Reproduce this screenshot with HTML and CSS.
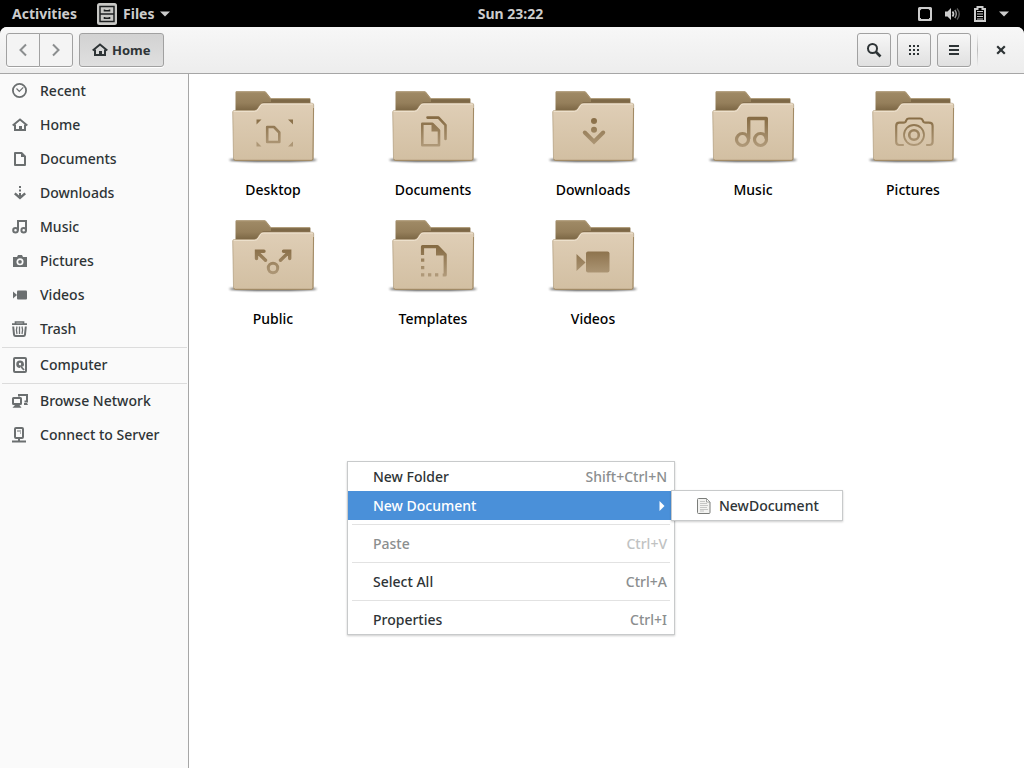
FILE: index.html
```html
<!DOCTYPE html>
<html lang="en">
<head>
<meta charset="utf-8">
<title>Home</title>
<link rel="stylesheet" href="styles.css">
</head>
<body>
<svg class="defs" aria-hidden="true">
  <defs>
    <linearGradient id="front" x1="0" y1="0" x2="0" y2="1">
      <stop offset="0" stop-color="#dfceb6"/><stop offset="1" stop-color="#d2bfa2"/>
    </linearGradient>
    <linearGradient id="back" gradientUnits="userSpaceOnUse" x1="0" y1="11" x2="0" y2="31">
      <stop offset="0" stop-color="#a08b67"/><stop offset=".6" stop-color="#957f5b"/><stop offset="1" stop-color="#7a6543"/>
    </linearGradient>
    <linearGradient id="mark" gradientUnits="userSpaceOnUse" x1="0" y1="36" x2="0" y2="68">
      <stop offset="0" stop-color="#846941"/><stop offset="1" stop-color="#b29c7c"/>
    </linearGradient>
    <filter id="soft" x="-10%" y="-100%" width="120%" height="300%"><feGaussianBlur stdDeviation="1.2"/></filter>
    <symbol id="folder" viewBox="0 0 106 90">
      <ellipse cx="53" cy="80" rx="44" ry="1.800" fill="#000" opacity=".75" filter="url(#soft)"/>
      <path d="M15.500 35V12.300q0-1 1-1H44.500q1 0 1.600.8L51 18.200h38.500q1 0 1 1V35z" fill="url(#back)"/>
      <path d="M51 19h39v6H40l3-3h8z" fill="#7d6847"/>
      <path d="M16 12h29l5.500 6.700H90" fill="none" stroke="#b09a76" stroke-width=".8"/>
      <path d="M12.700 32q0-1.500 1.500-1.500H34q2.300 0 3.500-1.800l2.500-4q1-1.500 3-1.500H92q1.700 0 1.700 1.700L93 78.500q0 2-2 2H15.500q-2 0-2-2z" fill="url(#front)" stroke="#a58e6b" stroke-width=".6"/>
      <path d="M13.500 31.300H34.500q2.300 0 3.500-1.800l2.500-4q1-1.500 3-1.500H92.800" fill="none" stroke="#f1e5d3" stroke-width="1"/>
      <path d="M14 79.300q.5 1 1.500 1h76q1.300 0 1.500-1.500L93.500 28" fill="none" stroke="#a18963" stroke-width="1"/>
    </symbol>
    <symbol id="home" viewBox="0 0 16 16">
      <path d="M.7 8.500 8 2.500l7.300 6" fill="none" stroke="currentColor" stroke-width="1.900"/>
      <path d="M3 7.500V13h10V7.500" fill="none" stroke="currentColor" stroke-width="2"/>
      <path d="M7 9h3v5H7z" fill="currentColor"/>
    </symbol>
  </defs>
</svg>

<header class="topbar">
  <div class="topbar-side">
    <button class="top-button">Activities</button>
    <button class="top-button app-button">
      <svg width="20" height="22" viewBox="0 0 20 22"><rect x="0" y="0" width="20" height="22" rx="2.500" fill="#c8c8c5"/><rect x="3" y="3.500" width="14" height="15" fill="none" stroke="#1c1f20" stroke-width="1.500"/><path d="M3 11h14" stroke="#1c1f20" stroke-width="1.500"/><path d="M7.500 6.500v1.200h5V6.500M7.500 14v1.200h5V14" fill="none" stroke="#1c1f20" stroke-width="1.600"/></svg>
      <span>Files</span>
      <svg width="10" height="6" viewBox="0 0 10 6"><path d="M0 .5h10L5 5.500z" fill="#ccc"/></svg>
    </button>
  </div>
  <button class="top-button clock">Sun 23:22</button>
  <div class="topbar-side topbar-end">
    <button class="top-button status" aria-label="System">
      <svg width="14" height="14" viewBox="0 0 14 14"><path fill-rule="evenodd" d="M1.500 0h11Q14 0 14 1.500v11q0 1.500-1.500 1.500h-11Q0 14 0 12.500v-11Q0 0 1.500 0zM3.500 2L2 3.500V11h1v1h8v-1h1V3.500L10.500 2z" fill="#ccc"/></svg>
      <svg width="16" height="14" viewBox="0 0 16 14"><path d="M0 4.500h2.500L6 1v12L2.500 9.500H0z" fill="#ccc"/><path d="M7.500 4.500q2 2.500 0 5" fill="none" stroke="#ccc" stroke-width="1.700"/><path d="M9.800 3q3 4 0 8" fill="none" stroke="#999" stroke-width="1.400"/><path d="M12 1.500q4.500 5.500 0 11" fill="none" stroke="#555" stroke-width="1.400"/></svg>
      <svg width="12" height="16" viewBox="0 0 12 16"><path d="M1 3h2.500V1h5v2H11v12H1z" fill="none" stroke="#ccc" stroke-width="2"/><path d="M3 5.500h6M3 8h6M3 10.500h6M3 13h6" stroke="#ccc" stroke-width="1.100"/></svg>
      <svg width="10" height="6" viewBox="0 0 10 6"><path d="M0 .5h10L5 5.500z" fill="#ccc"/></svg>
    </button>
  </div>
</header>

<div class="window">
  <div class="headerbar">
    <div class="linked">
      <button class="btn" aria-label="Back" disabled><svg width="16" height="16" viewBox="0 0 16 16"><path d="M11 2.500 5.500 8l5.500 5.500" fill="none" stroke="#8b8e8f" stroke-width="2"/></svg></button>
      <button class="btn" aria-label="Forward" disabled><svg width="16" height="16" viewBox="0 0 16 16"><path d="M5 2.500 10.500 8 5 13.500" fill="none" stroke="#8b8e8f" stroke-width="2"/></svg></button>
    </div>
    <button class="btn btn-path"><svg width="16" height="16"><use href="#home"/></svg><span>Home</span></button>
    <div class="tools">
      <button class="btn btn-icon" aria-label="Search"><svg width="16" height="16" viewBox="0 0 16 16"><circle cx="6.500" cy="6.500" r="4.500" fill="none" stroke="#2e3436" stroke-width="2"/><path d="M9.500 9.500 14.500 14.500" stroke="#2e3436" stroke-width="2.600"/></svg></button>
      <button class="btn btn-icon" aria-label="Grid view"><svg width="16" height="16" viewBox="0 0 16 16"><path d="M3 4h10M3 8h10M3 12h10" stroke="#2e3436" stroke-width="2" stroke-dasharray="2 2"/></svg></button>
      <button class="btn btn-icon" aria-label="Menu"><svg width="16" height="16" viewBox="0 0 16 16"><path d="M3 4h10M3 8h10M3 12h10" stroke="#2e3436" stroke-width="2"/></svg></button>
      <span class="divider"></span>
      <button class="close" aria-label="Close"><svg width="16" height="16" viewBox="0 0 16 16"><path d="M4.200 4.200l7.600 7.600M11.800 4.200l-7.600 7.600" stroke="#2e3436" stroke-width="2.200"/></svg></button>
    </div>
  </div>

  <div class="body">
    <nav class="sidebar">
      <a class="place" href="#"><svg width="16" height="16" viewBox="0 0 16 16"><circle cx="7.500" cy="7.500" r="6.600" fill="none" stroke="currentColor" stroke-width="1.800"/><path d="M4.500 5.500 7.300 8.300l4-4" fill="none" stroke="currentColor" stroke-width="1.200"/></svg>Recent</a>
      <a class="place" href="#"><svg width="16" height="16"><use href="#home"/></svg>Home</a>
      <a class="place" href="#"><svg width="16" height="16" viewBox="0 0 16 16"><path d="M3 2h6.500L13 5.500V14H3z" fill="none" stroke="currentColor" stroke-width="2" stroke-linejoin="round"/><path d="M9 2v4h4z" fill="currentColor"/></svg>Documents</a>
      <a class="place" href="#"><svg width="16" height="16" viewBox="0 0 16 16"><path d="M8 1v2M8 4.500v2M8 8v3" stroke="currentColor" stroke-width="2"/><path d="M2.800 8.300 8 13l5.200-4.700" fill="none" stroke="currentColor" stroke-width="2.400"/></svg>Downloads</a>
      <a class="place" href="#"><svg width="16" height="16" viewBox="0 0 16 16"><path d="M6 11.500V2h8v9.500" fill="none" stroke="currentColor" stroke-width="2"/><circle cx="3.500" cy="11.200" r="2.300" fill="none" stroke="currentColor" stroke-width="2"/><circle cx="11.700" cy="11.200" r="2.300" fill="none" stroke="currentColor" stroke-width="2"/></svg>Music</a>
      <a class="place" href="#"><svg width="16" height="16" viewBox="0 0 16 16"><path d="M1 4h4l1-2h4l1 2h4v10H1z" fill="currentColor"/><circle cx="8" cy="8.800" r="2.700" fill="none" stroke="#fafafa" stroke-width="1.700"/></svg>Pictures</a>
      <a class="place" href="#"><svg width="16" height="16" viewBox="0 0 16 16"><rect x="5" y="3.500" width="10" height="9" rx="1" fill="currentColor"/><path d="M1 4.500 5 8l-4 3.500z" fill="currentColor"/></svg>Videos</a>
      <a class="place" href="#"><svg width="16" height="16" viewBox="0 0 16 16"><path d="M3.500 3V1h8v2M0 3.200h15" fill="none" stroke="currentColor" stroke-width="1.700"/><path d="M1.200 5.500 2 13.500q.2 1.500 1.500 1.500h8q1.300 0 1.500-1.500l.8-8" fill="none" stroke="currentColor" stroke-width="2"/><path d="M5 5.500q-1.200 3.500 0 7.500M10 5.500q1.200 3.500 0 7.500M7.500 5.500V13" fill="none" stroke="currentColor" stroke-width="1.300"/></svg>Trash</a>
      <hr class="rule">
      <a class="place" href="#"><svg width="16" height="16" viewBox="0 0 16 16"><rect x="2" y="1" width="12" height="14" rx="1" fill="none" stroke="currentColor" stroke-width="2"/><path d="M8 3.500a3.700 3.700 0 1 0 0 7.500l.4-2.500 2.600 1.200A3.700 3.700 0 0 0 8 3.500z" fill="currentColor"/><circle cx="8" cy="7" r="1.200" fill="#fafafa"/><path d="M8.500 9l3.500 4" stroke="currentColor" stroke-width="1.800"/></svg>Computer</a>
      <hr class="rule">
      <a class="place" href="#"><svg width="16" height="16" viewBox="0 0 16 16"><path d="M7 3.500V2h8v6.500h-2.500" fill="none" stroke="currentColor" stroke-width="2"/><path d="M12 10h3l1 2h-4z" fill="currentColor"/><rect x="1" y="5" width="8" height="6" rx=".5" fill="none" stroke="currentColor" stroke-width="2"/><path d="M3 12h4.500l2 2.700H.5z" fill="currentColor"/></svg>Browse Network</a>
      <a class="place" href="#"><svg width="16" height="16" viewBox="0 0 16 16"><rect x="3" y="1" width="8" height="10" rx="1" fill="none" stroke="currentColor" stroke-width="2"/><path d="M5 4h4M8 6h1" stroke="currentColor" stroke-width="1"/><path d="M7 12v2.500M0 14.500h14" stroke="currentColor" stroke-width="2"/></svg>Connect to Server</a>
    </nav>

    <main class="files">
      <button class="file"><svg width="106" height="90" viewBox="0 0 106 90"><use href="#folder"/><path d="M36.500 39.500h5l-5 5zM73 39.500h-5l5 5zM36.500 66.500h5l-5-5zM73 66.500h-5l5-5z" fill="url(#mark)"/><path d="M47.200 47h6.800l5.300 5.500V62H47.200z" fill="none" stroke="url(#mark)" stroke-width="2.600" stroke-linejoin="round"/></svg><span>Desktop</span></button>
      <button class="file"><svg width="106" height="90" viewBox="0 0 106 90"><use href="#folder"/><path d="M42.300 43.800h10.200l6.500 6.500v15H42.300z" fill="none" stroke="url(#mark)" stroke-width="2.600" stroke-linejoin="round"/><path d="M51.500 43v8.500h8.500z" fill="url(#mark)"/><path d="M47.500 37.600h11l7 7.500V59" fill="none" stroke="url(#mark)" stroke-width="2.600" stroke-linecap="round" stroke-linejoin="round"/></svg><span>Documents</span></button>
      <button class="file"><svg width="106" height="90" viewBox="0 0 106 90"><use href="#folder"/><circle cx="54" cy="41" r="3" fill="url(#mark)"/><circle cx="54" cy="49.800" r="3" fill="url(#mark)"/><path d="M44.800 52.500 54 61.700l9.200-9.200" fill="none" stroke="url(#mark)" stroke-width="4" stroke-linecap="round"/></svg><span>Downloads</span></button>
      <button class="file"><svg width="106" height="90" viewBox="0 0 106 90"><use href="#folder"/><path d="M48.700 59V38.500h17.600V59" fill="none" stroke="url(#mark)" stroke-width="3.400" stroke-linejoin="round"/><circle cx="42.500" cy="59.500" r="6" fill="none" stroke="url(#mark)" stroke-width="3.200"/><circle cx="60.500" cy="59.500" r="6" fill="none" stroke="url(#mark)" stroke-width="3.200"/></svg><span>Music</span></button>
      <button class="file"><svg width="106" height="90" viewBox="0 0 106 90"><use href="#folder"/><path d="M43 65h-3.500q-3.300 0-3.300-3.300V46q0-3.300 3.300-3.300h4q2 0 2.600-2l.4-.8q.6-1.400 2.400-1.400h11.200q1.800 0 2.400 1.400l.4.800q.6 2 2.600 2h3.300q3.800 0 3.800 3.300v15.700q0 3.300-3.300 3.300H67" fill="none" stroke="url(#mark)" stroke-width="2.200" stroke-linecap="round"/><circle cx="54" cy="55" r="10" fill="none" stroke="url(#mark)" stroke-width="1.800"/><circle cx="54" cy="55" r="4.800" fill="none" stroke="url(#mark)" stroke-width="2.600"/></svg><span>Pictures</span></button>
      <button class="file"><svg width="106" height="90" viewBox="0 0 106 90"><use href="#folder"/><path d="M36.500 49.500v-7.200H44M37.500 43.500l8 7.800M63.500 42.300h6.200v7.200M68.500 43.500l-8 7.800" fill="none" stroke="url(#mark)" stroke-width="3.400" stroke-linecap="round"/><circle cx="53" cy="59" r="4.700" fill="none" stroke="url(#mark)" stroke-width="3"/></svg><span>Public</span></button>
      <button class="file"><svg width="106" height="90" viewBox="0 0 106 90"><use href="#folder"/><path d="M42.500 46v-8.300h15l7.700 8V66h-2.500" fill="none" stroke="url(#mark)" stroke-width="3.200" stroke-linejoin="round"/><path d="M56 37v9.500h9.500z" fill="url(#mark)"/><path d="M41 49.500h3.300v3.300H41zM41 57h3.300v3.300H41zM41 64.300h3.300v3.300H41zM48 64.300h3.300v3.300H48zM55 64.300h3.300v3.300H55z" fill="url(#mark)"/></svg><span>Templates</span></button>
      <button class="file"><svg width="106" height="90" viewBox="0 0 106 90"><use href="#folder"/><rect x="46" y="42.500" width="23.500" height="21" rx="2" fill="url(#mark)"/><path d="M36.500 45v17l9-8.500z" fill="url(#mark)"/></svg><span>Videos</span></button>
    </main>
  </div>
</div>

<div class="menu context-menu" role="menu">
  <button class="item" role="menuitem"><span>New Folder</span><kbd>Shift+Ctrl+N</kbd></button>
  <button class="item item-active" role="menuitem"><span>New Document</span><svg width="6" height="10" viewBox="0 0 6 10"><path d="M.5 0 5.500 5l-5 5z" fill="#fff"/></svg></button>
  <hr class="menu-rule">
  <button class="item" role="menuitem" disabled><span>Paste</span><kbd>Ctrl+V</kbd></button>
  <hr class="menu-rule">
  <button class="item" role="menuitem"><span>Select All</span><kbd>Ctrl+A</kbd></button>
  <hr class="menu-rule">
  <button class="item" role="menuitem"><span>Properties</span><kbd>Ctrl+I</kbd></button>
</div>
<div class="menu submenu" role="menu">
  <button class="item" role="menuitem"><svg width="14" height="16" viewBox="0 0 14 16"><path d="M1.500.5h8L13 4v10.500q0 1-1 1H1.500q-1 0-1-1v-13q0-1 1-1z" fill="#f3f3f1" stroke="#7b7d7a"/><path d="M9.500.5V4H13z" fill="#fff" stroke="#8c8e8b" stroke-width=".8"/><path d="M3 3.500h5M3 5.500h7M3 7.500h8M3 9.500h7M3 11.500h8M3 13h4" stroke="#c0c1bf" stroke-width=".9"/></svg><span>NewDocument</span></button>
</div>
</body>
</html>
```
FILE: styles.css
```css
* { box-sizing: border-box; }

body {
  margin: 0;
  min-height: 100vh;
  display: flex;
  flex-direction: column;
  background: #000;
  color: #2e3436;
  font: 500 14px/20px "Noto Sans", "Open Sans", sans-serif;
}

button {
  margin: 0;
  padding: 0;
  border: 0;
  background: none;
  color: inherit;
  font: inherit;
}

svg { display: block; flex: none; }

.defs { position: absolute; width: 0; height: 0; }

/* Shell panel */
.topbar {
  display: grid;
  grid-template-columns: 1fr auto 1fr;
  align-items: center;
  height: 27px;
  padding: 0 15px 0 12px;
  color: #ccc;
  font-size: 14px;
  font-weight: bold;
}
.topbar-side { display: flex; align-items: center; gap: 20px; }
.topbar-end { justify-content: flex-end; }
.app-button { display: flex; align-items: center; gap: 6px; }
.status { display: flex; align-items: center; gap: 13px; }

/* Window */
.window {
  flex: 1;
  display: flex;
  flex-direction: column;
  background: #fff;
  border-radius: 7px 7px 0 0;
  overflow: hidden;
}
.headerbar {
  display: flex;
  align-items: center;
  gap: 6px;
  height: 47px;
  padding: 0 6px;
  border-bottom: 1px solid #a6a6a6;
  background: linear-gradient(#f7f7f7, #ededed);
}
.btn {
  height: 34px;
  display: flex;
  align-items: center;
  justify-content: center;
  border: 1px solid #a1a1a1;
  border-radius: 3px;
  background: linear-gradient(#f7f7f7, #e0e0e0);
  box-shadow: 0 1px #fff;
}
.btn-icon { width: 34px; }
.linked { display: flex; }
.linked .btn { width: 34px; background: #f4f4f4; }
.linked .btn:first-child { border-radius: 3px 0 0 3px; }
.linked .btn:last-child { margin-left: -1px; border-radius: 0 3px 3px 0; }
.btn-path {
  gap: 4px;
  padding: 0 12px;
  font-size: 13px;
  font-weight: bold;
  background: linear-gradient(#d2d2d2, #dfdfdf);
}
.tools { display: flex; align-items: center; gap: 6px; margin-left: auto; }
.divider {
  width: 1px;
  height: 34px;
  background: linear-gradient(transparent, #bbb, transparent);
}
.close { padding: 9px; }

.body { flex: 1; display: flex; }

.sidebar {
  flex: 0 0 189px;
  border-right: 1px solid #a6a6a6;
  background: #fafafa;
}
.place {
  display: flex;
  align-items: center;
  gap: 12px;
  height: 34px;
  padding-left: 12px;
  color: #2e3436;
  text-decoration: none;
}
.place svg { color: #6b6f70; }
.rule { height: 1px; margin: 1px 1px 0 2px; border: 0; background: #dcdcdc; }

.files {
  flex: 1;
  display: grid;
  grid-template-columns: repeat(auto-fill, 160px);
  align-content: start;
  row-gap: 9px;
  padding: 6px 4px;
}
.file {
  display: flex;
  flex-direction: column;
  align-items: center;
  gap: 10px;
  color: #000;
}

/* Menus */
.menu {
  position: absolute;
  padding: 0;
  border: 1px solid #c8cacb;
  background: #fff;
  box-shadow: 0 1px 2px rgba(0, 0, 0, .2);
}
.context-menu { left: 347px; top: 461px; width: 328px; }
.submenu { left: 671px; top: 490px; width: 172px; }
.item {
  display: flex;
  align-items: center;
  justify-content: space-between;
  width: 100%;
  height: 29px;
  padding: 0 7px 0 25px;
}
.item kbd { color: #8b8e8f; font: inherit; }
.item:disabled { color: #8b8e8f; }
.item:disabled kbd { color: #c0c2c2; }
.item-active { padding-right: 9px; background: #4a90d9; color: #fff; }
.submenu .item { justify-content: flex-start; gap: 8px; }
.menu-rule { height: 1px; margin: 4px; border: 0; background: #e2e2e2; }
```
